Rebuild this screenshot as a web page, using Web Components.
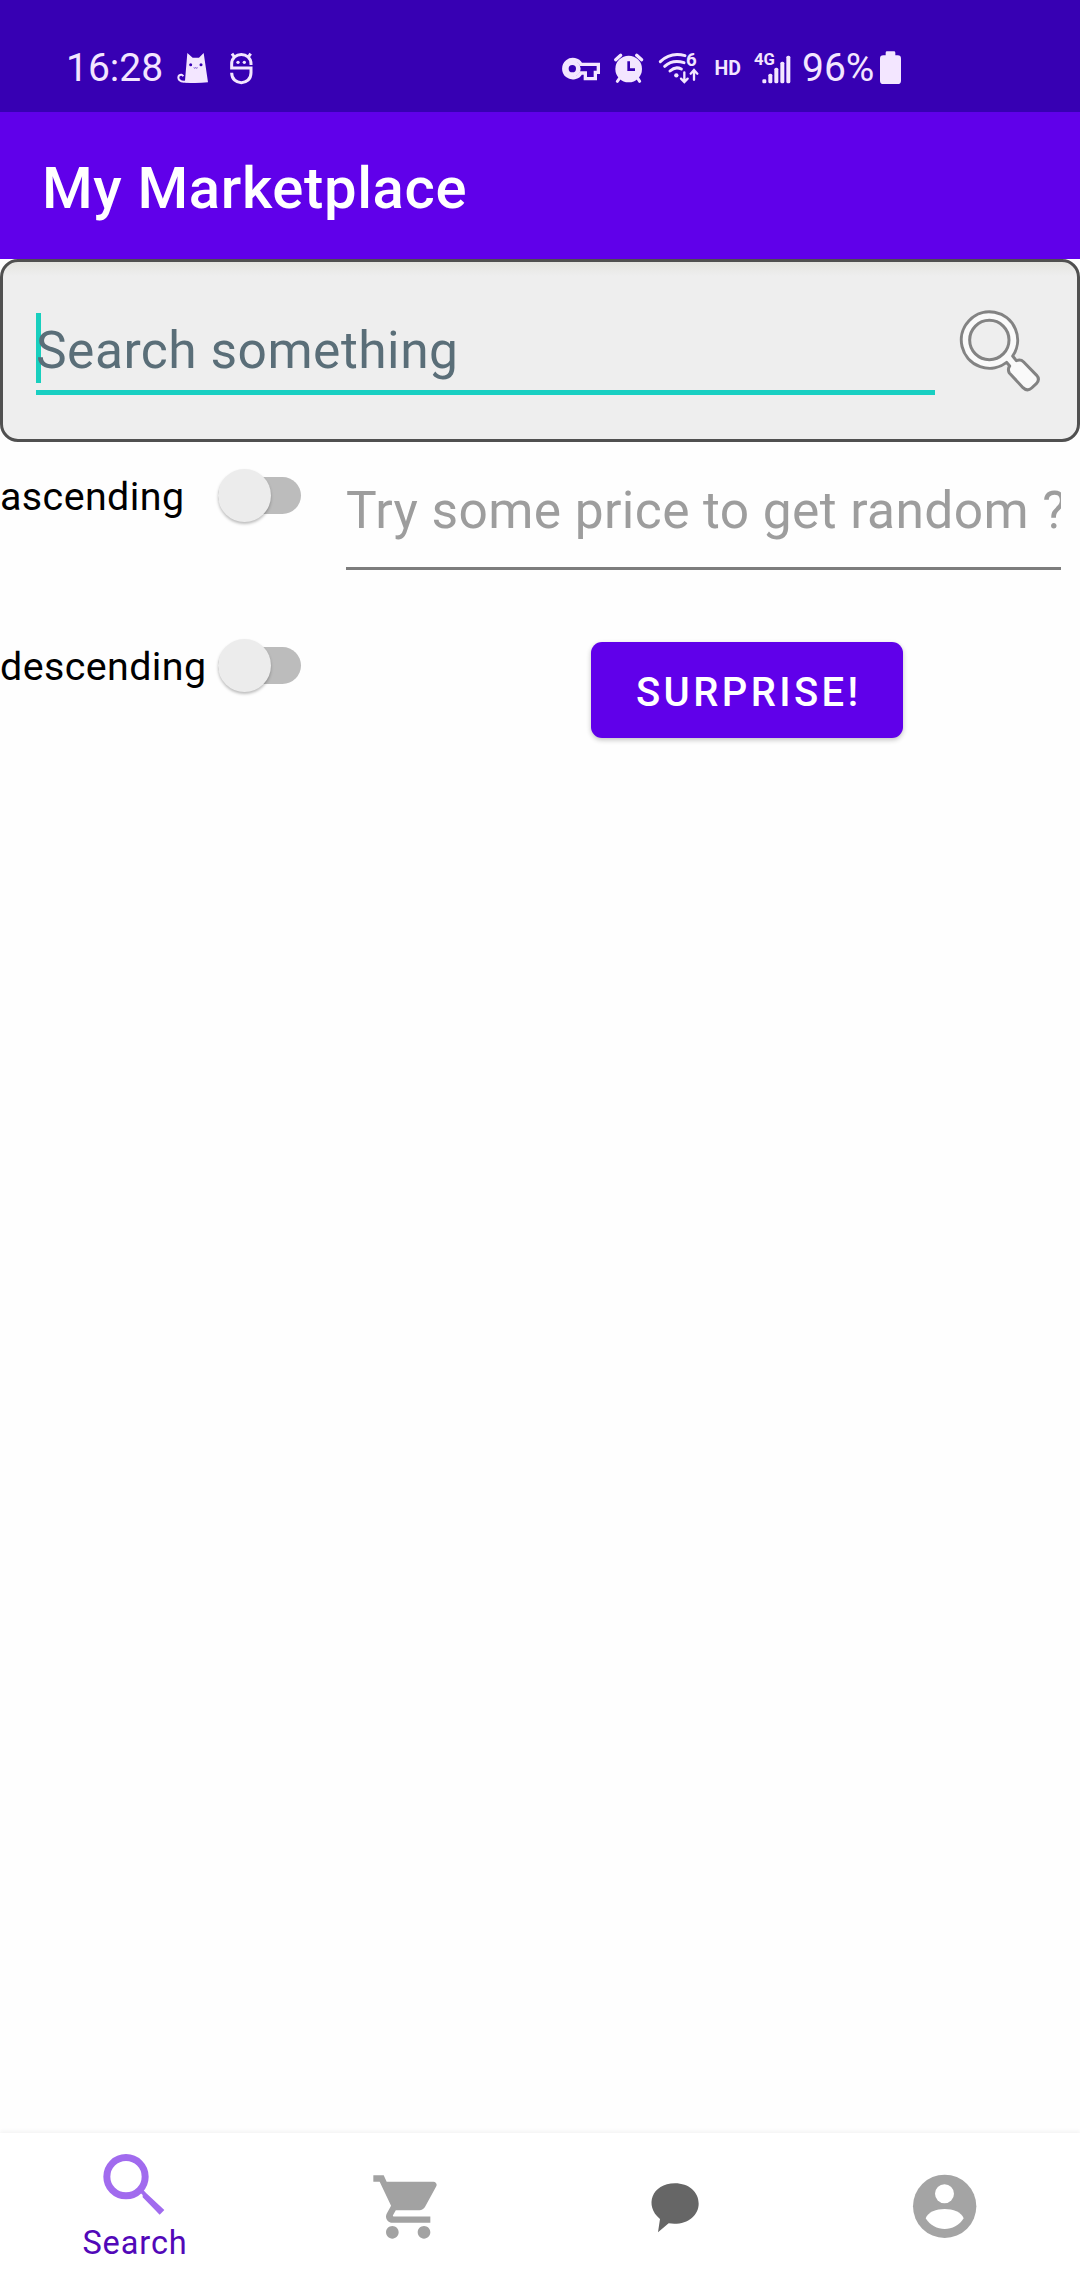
<!DOCTYPE html>
<html lang="en">
<head>
<meta charset="utf-8">
<title>My Marketplace</title>
<style>
html,body{margin:0;padding:0;background:#fefefe}
body{width:1080px;height:2280px;overflow:hidden;font-family:Roboto,"Liberation Sans",sans-serif}
</style>
</head>
<body>
<market-app></market-app>
<script>
const define = (name, html) => {
  const t = document.createElement('template');
  t.innerHTML = html;
  customElements.define(name, class extends HTMLElement {
    constructor() {
      super();
      this.attachShadow({ mode: 'open' }).appendChild(t.content.cloneNode(true));
    }
  });
};

define('status-bar', `
<style>
:host{display:flex;align-items:flex-start;box-sizing:border-box;height:112px;padding:30px 0 0 66px;background:#3700b3;color:#f3e6ff;font-size:39px;line-height:77px;white-space:nowrap}
svg{display:block;height:80px;flex:none;overflow:visible}
span{flex:none;display:block}
.time{width:97px}
.hd{width:29px;margin-left:14.5px;font-size:19.5px;font-weight:700}
.pct{width:73px;margin-left:10px}
text{font-family:Roboto,sans-serif;font-weight:700}
</style>
<span class="time">16:28</span>
<svg style="width:35px;margin-left:12px" viewBox="375 0 105 240"><path d="M405 152L412 69L428 83H447L461 69L474 157Q440 161 406 158Z" fill="#f3e6ff"/><path d="M412 154C388 160 380 143 388 136Q395 131 400 139" fill="none" stroke="#f3e6ff" stroke-width="6"/><circle cx="422" cy="104" r="4.5" fill="#3700b3"/><circle cx="453" cy="104" r="4.5" fill="#3700b3"/><path d="M431 113q3 3 6 0q3 3 6 0" fill="none" stroke="#3700b3" stroke-width="2"/></svg>
<svg style="width:28px;margin-left:17px" viewBox="531 0 84 240" fill="none" stroke="#f3e6ff" stroke-width="9"><path d="M603 105V102C603 64 545 64 545 102V114H603V128C603 168 545 168 545 128M555 84L546 71M593 84L602 71"/><g fill="#f3e6ff" stroke="none"><circle cx="564" cy="97" r="5"/><circle cx="583" cy="97" r="5"/></g></svg>
<svg style="width:41px;margin-left:305px" viewBox="30 0 123 240"><path d="M93 103A27.500 27.500 0 1 0 93 129H106V146H136V127H145V103Z" fill="none" stroke="#f3e6ff" stroke-width="10"/><circle cx="67" cy="116" r="18" fill="none" stroke="#f3e6ff" stroke-width="14"/><path d="M109 113H127V122H109Z" fill="#3700b3"/></svg>
<svg style="width:33px;margin-left:11px" viewBox="186 0 99 240" stroke="#f3e6ff" stroke-linecap="round"><circle cx="236" cy="117" r="40" fill="#f3e6ff" stroke="none"/><path d="M197 89L212 76M260 76L275 89" stroke-width="10"/><path d="M210 143L202 154M262 143L269 154" stroke-width="9"/><path d="M236 94V119H255" fill="none" stroke="#3700b3" stroke-width="8" stroke-linecap="butt"/></svg>
<svg style="width:43px;margin-left:12px" viewBox="321 0 129 240" fill="none" stroke="#f3e6ff" stroke-width="9" stroke-linecap="round"><path d="M331 95Q362 65 405 77M344 109Q368 87 402 98M360 123Q376 108 394 117"/><circle cx="379" cy="136" r="6.5" fill="#f3e6ff" stroke="none"/><path d="M403 127V155M393 146L403 156L413 146M432 149V121M422 131L432 120L442 131" stroke-width="7"/><text x="408" y="109" font-size="56" fill="#f3e6ff" stroke="none">6</text></svg>
<span class="hd">HD</span>
<svg style="width:39px;margin-left:9.5px" viewBox="69 0 117 240" fill="#f3e6ff"><text x="72" y="105" font-size="50">4G</text><rect x="97" y="148" width="12" height="12" rx="4"/><rect x="115" y="131" width="12" height="29" rx="5"/><rect x="133" y="113" width="12" height="47" rx="5"/><rect x="151" y="95" width="12" height="65" rx="5"/><rect x="169" y="77" width="12" height="83" rx="5"/></svg>
<span class="pct">96%</span>
<svg style="width:23px;margin-left:4px" viewBox="447 0 69 240" fill="#f3e6ff"><path d="M467 68Q467 64 471 64H492Q496 64 496 68V76H503Q513 76 513 86V152Q513 162 503 162H460Q450 162 450 152V86Q450 76 460 76H467Z"/></svg>
`);

define('app-bar', `
<style>
:host{display:flex;align-items:center;box-sizing:border-box;height:147px;padding:4px 0 0 42px;background:#6000ea;color:#fff;font-size:58px;font-weight:500;letter-spacing:.65px;white-space:nowrap}
</style><slot></slot>`);

define('search-box', `
<style>
:host{display:flex;box-sizing:border-box;height:183px;border:3px solid #505050;border-radius:18px;padding:45px 0 0 33px;background:linear-gradient(#e4e4e0,#eee 14px) #eee}
.field{position:relative;z-index:0;width:899px;height:83px;border-bottom:5px solid #18cfc2;font-size:51.5px;letter-spacing:.5px;line-height:87px;color:#5a6e78;white-space:nowrap}
.caret{position:absolute;z-index:-1;left:0;top:6px;width:5px;height:70px;background:#18cfbe}
svg{width:85px;height:88px;margin-left:22px}
</style>
<div class="field"><i class="caret"></i><slot></slot></div>
<svg viewBox="171 171 255 264" fill="#fafafa" stroke="#838383" stroke-width="9" stroke-linejoin="round"><path d="M320 337L329 348Q322 357 328 369L369 413Q382 426 395 414L409 401Q421 388 410 376L371 336Q362 327 349 332L338 318A84.500 84.500 0 1 0 320 337Z"/><circle cx="268" cy="270" r="59" fill="#eee"/></svg>`);

define('toggle-switch', `
<style>
:host{display:flex;align-items:center;height:106px;width:301px;color:#000;font-size:39.4px;letter-spacing:.42px;white-space:nowrap}
.label{width:218px;padding-top:3px}
.track{width:83px;height:37px;border-radius:19px;background:#bcbcbc;display:flex;align-items:center}
.thumb{flex:none;width:53px;height:53px;border-radius:50%;background:#ececec;box-shadow:0 2px 3px rgba(0,0,0,.26)}
</style>
<div class="label"><slot></slot></div><div class="track"><div class="thumb"></div></div>`);

define('price-field', `
<style>
:host{display:block;width:715px;height:92px;border-bottom:3px solid #7d7d7d;font-size:51.5px;letter-spacing:.4px;line-height:72px;color:#9d9d9d;white-space:nowrap;overflow:hidden}
</style><slot></slot>`);

define('raised-button', `
<style>
:host{display:flex;align-items:center;justify-content:center;box-sizing:border-box;width:312px;height:96px;padding:5px 0 0 3.5px;border-radius:11px;background:#6000ea;color:#fff;font-size:40px;font-weight:500;letter-spacing:3.4px;box-shadow:0 2px 5px rgba(0,0,0,.24);white-space:nowrap}
</style><slot></slot>`);

define('filter-panel', `
<style>
:host{display:flex;gap:45px}
.left{display:flex;flex-direction:column;gap:64px}
.right{display:flex;flex-direction:column;gap:72px;padding-top:33px}
.action{padding-left:245px}
</style>
<div class="left"><toggle-switch>ascending</toggle-switch><toggle-switch>descending</toggle-switch></div>
<div class="right"><price-field>Try some price to get random ?</price-field><div class="action"><raised-button>SURPRISE!</raised-button></div></div>`);

define('nav-item', `
<style>
:host{display:flex;flex:1;flex-direction:column;align-items:center;color:#5208b8;font-size:32.5px;letter-spacing:.9px;line-height:41px}
</style><slot></slot>`);

define('bottom-nav', `
<style>
:host{display:flex;height:147px;background:#fff;box-shadow:0 -2px 4px rgba(0,0,0,.045)}
svg{display:block}
</style>
<nav-item><svg width="90" height="90" viewBox="269 66 270 270" style="margin:-1px 0 1px"><circle cx="377" cy="200" r="57.500" fill="none" stroke="#a16bee" stroke-width="21"/><path d="M418 246L427 238L438 250L492 300L478 314L427 262V255Z" fill="#a16bee"/></svg>Search</nav-item>
<nav-item><svg width="76" height="76" viewBox="-1 0 24 24" fill="#a2a2a2" style="margin-top:36px"><path d="M7 18c-1.100 0-1.990.9-1.990 2S5.900 22 7 22s2-.9 2-2-.9-2-2-2zM1 2v2h2l3.600 7.590-1.350 2.450c-.16.28-.25.61-.25.960 0 1.100.9 2 2 2h12v-2H7.420c-.14 0-.25-.11-.25-.25l.03-.12.900-1.630h7.450c.75 0 1.410-.41 1.750-1.030l3.580-6.490c.08-.14.12-.31.12-.48 0-.55-.45-1-1-1H5.210l-.94-2H1zm16 16c-1.100 0-1.990.9-1.990 2s.89 2 1.990 2 2-.9 2-2-.9-2-2-2z"/></svg></nav-item>
<nav-item><svg width="76" height="76" viewBox="111 144 228 228" style="margin-top:35px"><path d="M180 297C132 258 155 190 225 190C266 190 296 216 296 251C296 288 258 318 206 310L174 337Z" fill="#666"/></svg></nav-item>
<nav-item><svg width="76" height="76" viewBox="111 144 228 228" style="margin-top:35px"><circle cx="224" cy="259" r="95" fill="#a4a4a4"/><circle cx="223.500" cy="221" r="28.500" fill="#fff"/><path d="M167 295C181 258 267 258 281 295C255 338 193 338 167 295Z" fill="#fff"/></svg></nav-item>`);

define('market-app', `
<style>
:host{display:flex;flex-direction:column;width:1080px;height:2280px;background:#fefefe}
.body{flex:1}
</style>
<status-bar></status-bar>
<app-bar>My Marketplace</app-bar>
<search-box>Search something</search-box>
<filter-panel class="body"></filter-panel>
<bottom-nav></bottom-nav>`);
</script>
</body>
</html>
